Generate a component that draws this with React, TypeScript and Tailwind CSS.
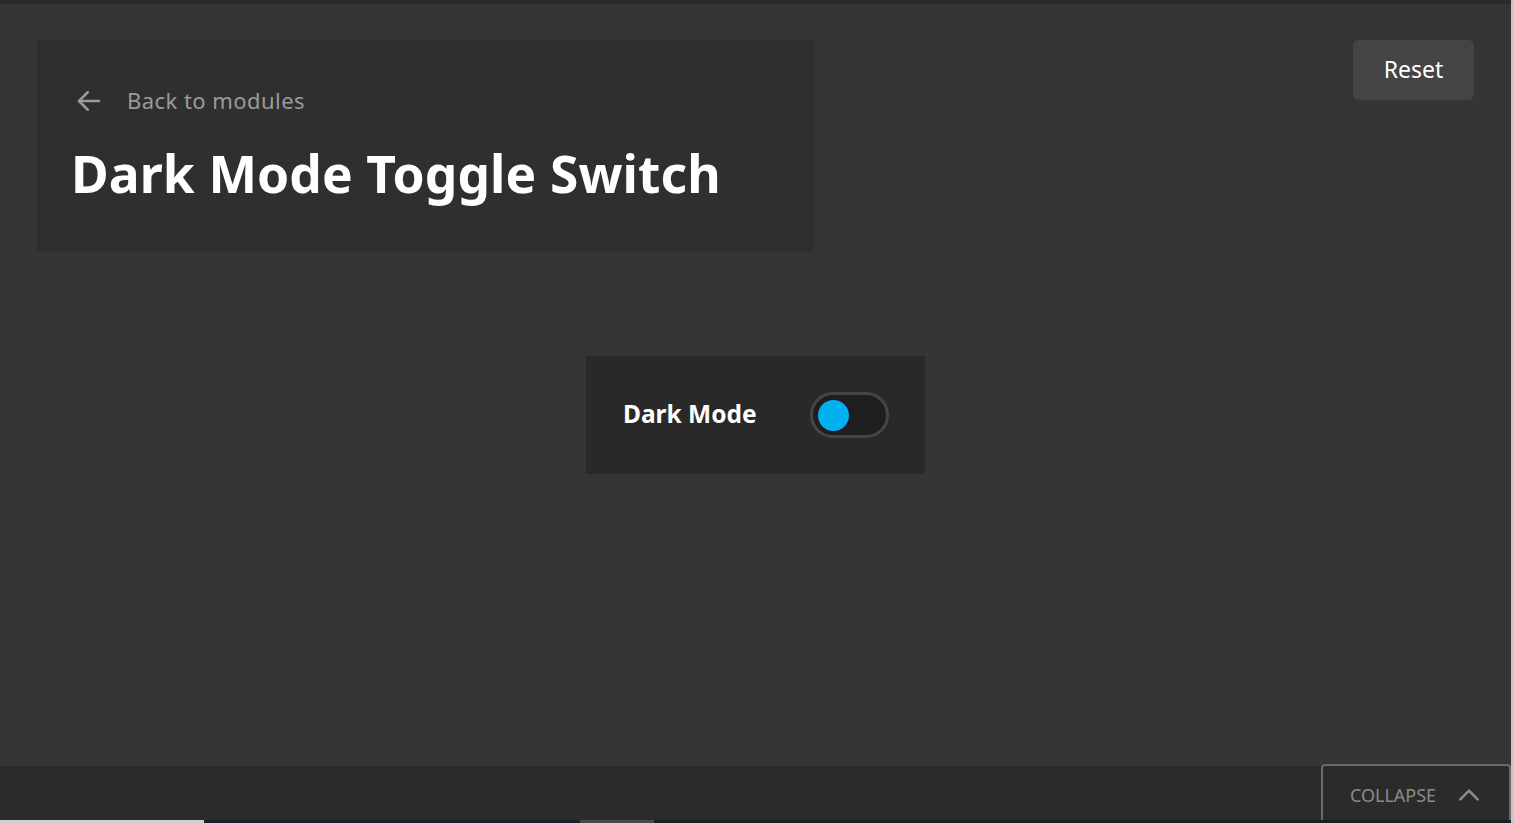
import React, { useState } from 'react';

const font = { fontFamily: '"Noto Sans", Lato, sans-serif' };

export default function App() {
  const [dark, setDark] = useState(true);

  return (
    <div className="w-[1514px] h-[823px] flex overflow-hidden bg-[#2a2a2a]" style={font}>
      <div className="flex-1 flex flex-col">
        <div className="h-[4px] bg-[#2b2b2b]" />
        <main className="flex-1 bg-[#353535] flex flex-col px-[37px] pt-[36px]">
          <div className="flex items-start justify-between">
            <div className="w-[777px] h-[212px] bg-[#2f2f2f] rounded-[3px] pl-[36px] pt-[44px]">
              <button className="flex items-center gap-[23px] pl-[1px] text-[#9a9a9a] text-[22px] tracking-[0.45px]">
                <svg width="30" height="30" viewBox="0 0 24 24" fill="none" stroke="#9a9a9a" strokeWidth="2" strokeLinecap="round" strokeLinejoin="round">
                  <path d="M20 12H4" />
                  <path d="M11 5l-7 7 7 7" />
                </svg>
                <span>Back to modules</span>
              </button>
              <h1 className="text-white font-bold text-[51.5px] leading-none mt-[31px] -ml-[2px] tracking-[0.1px]">Dark Mode Toggle Switch</h1>
            </div>
            <button className="w-[121px] h-[60px] rounded-[6px] bg-[#444444] text-white text-[23px] pb-[2px]">Reset</button>
          </div>

          <div className="flex justify-center mt-[104px]">
            <div className="w-[339px] h-[118px] bg-[#292929] flex items-center justify-between pl-[37px] pr-[36px]">
              <span className="text-white font-bold text-[24.5px] pb-[2px]">Dark Mode</span>
              <button
                onClick={() => setDark(!dark)}
                className="w-[79px] h-[46px] rounded-full border-[3px] border-[#454545] bg-[#1e1e1e] flex items-center px-[5px]"
              >
                <span className={`w-[31px] h-[31px] rounded-full bg-[#00b0f0] ${dark ? '' : 'ml-auto'}`} />
              </button>
            </div>
          </div>
        </main>
        <footer className="h-[54px] bg-[#2b2b2b] relative">
          <div className="absolute right-0 top-[-2px] w-[190px] h-[56px] border-2 border-b-0 border-[#6a6a6a] rounded-t-[4px] bg-[#2b2b2b] flex items-center justify-center gap-[20px] pt-[4px] text-[#8a8a8a] text-[18px]">
            <span>COLLAPSE</span>
            <svg width="26" height="26" viewBox="0 0 24 24" fill="none" stroke="#8a8a8a" strokeWidth="2.5" strokeLinecap="round" strokeLinejoin="round">
              <path d="M4 16l8-8 8 8" />
            </svg>
          </div>
        </footer>
        <div className="h-[3px] flex">
          <div className="w-[204px] bg-[#d0d0d0]" />
          <div className="w-[376px] bg-[#1a2230]" />
          <div className="w-[74px] bg-[#4a4a4a]" />
          <div className="flex-1 bg-[#1a1e26]" />
        </div>
      </div>
      <div className="w-[3px] flex flex-col">
        <div className="flex-1 bg-[#c8c8c8]" />
      </div>
    </div>
  );
}
